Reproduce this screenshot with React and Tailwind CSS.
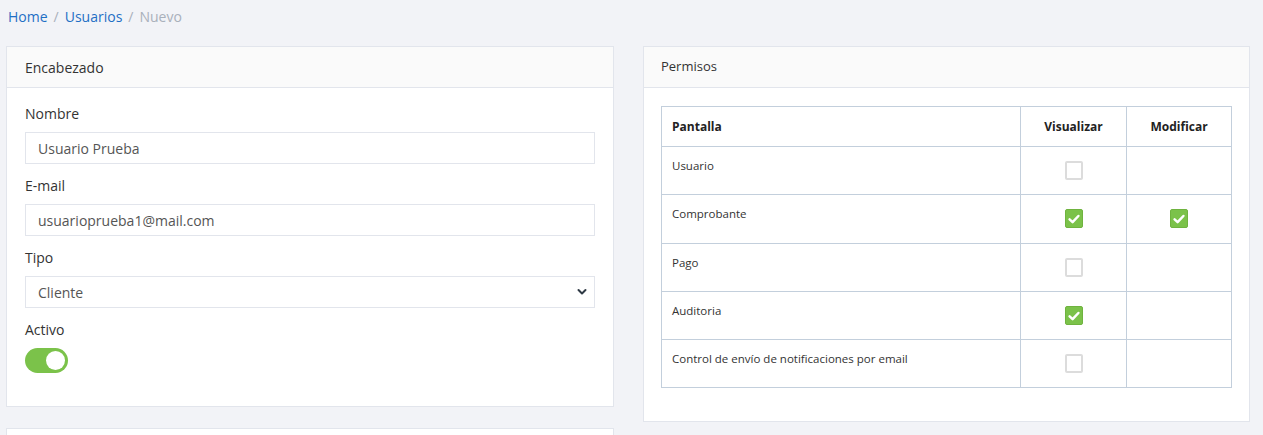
import React from "react";

const rows = [
  { name: "Usuario", v: false, m: null },
  { name: "Comprobante", v: true, m: true },
  { name: "Pago", v: false, m: null },
  { name: "Auditoria", v: true, m: null },
  { name: "Control de envío de notificaciones por email", v: false, m: null },
];

function Check({ checked }) {
  if (checked) {
    return (
      <div className="w-[18px] h-[19px] rounded-[2px] bg-[#7bc24a] border border-[#6fb33f] flex items-center justify-center">
        <svg width="14" height="14" viewBox="0 0 14 14">
          <path d="M2.6 7.4 L5.6 10.2 L11.4 4" fill="none" stroke="white" strokeWidth="2.5" strokeLinecap="round" strokeLinejoin="round" />
        </svg>
      </div>
    );
  }
  return <div className="w-[18px] h-[19px] rounded-[2px] bg-white border-2 border-[#dcdcdc]" />;
}

function Field({ label, children }) {
  return (
    <div className="mb-3">
      <div className="h-5 leading-5 text-[14px] text-[#333] mb-2">{label}</div>
      {children}
    </div>
  );
}

export default function App() {
  return (
    <div className="min-h-[435px] bg-[#f2f3f7] px-[6px] text-[#333]" style={{ fontFamily: '"Open Sans", "Noto Sans", sans-serif' }}>
      <div className="h-[46px] pt-[7px] text-[14px] leading-5 flex items-start gap-[6px] pl-[2px]">
        <span className="text-[#1f6fc5]">Home</span>
        <span className="text-[#a9b0bb]">/</span>
        <span className="text-[#1f6fc5]">Usuarios</span>
        <span className="text-[#a9b0bb]">/</span>
        <span className="text-[#a9b0bb]">Nuevo</span>
      </div>
      <div className="flex gap-[29px] items-start">
        <div className="w-[608px] flex flex-col gap-[21px]">
          <div className="bg-white border border-[#e2e5ec]">
            <div className="h-[41px] bg-[#fafafa] border-b border-[#e2e5ec] px-[18px] flex items-center text-[14px] text-[#333]">Encabezado</div>
            <div className="pt-4 px-[18px] pb-[21px]">
              <Field label="Nombre">
                <div className="h-8 border border-[#e2e5ec] px-3 flex items-center text-[14px] text-[#555]">Usuario Prueba</div>
              </Field>
              <Field label="E-mail">
                <div className="h-8 border border-[#e2e5ec] px-3 flex items-center text-[14px] text-[#555]">usuarioprueba1@mail.com</div>
              </Field>
              <Field label="Tipo">
                <div className="h-8 border border-[#e2e5ec] pl-3 pr-[7px] flex items-center justify-between text-[14px] text-[#555]">
                  <span>Cliente</span>
                  <svg width="10" height="8" viewBox="0 0 10 8">
                    <path d="M1.5 2 L5 5.5 L8.5 2" fill="none" stroke="#2f3a45" strokeWidth="2" strokeLinecap="round" strokeLinejoin="round" />
                  </svg>
                </div>
              </Field>
              <Field label="Activo">
                <div className="w-[43px] h-[25px] rounded-full bg-[#7bc24a] flex items-center justify-end pr-[3px]">
                  <div className="w-[19px] h-[19px] rounded-full bg-white" />
                </div>
              </Field>
            </div>
          </div>
          <div className="bg-white border border-[#e2e5ec] h-[20px] border-b-0" />
        </div>
        <div className="w-[607px] bg-white border border-[#e2e5ec]">
          <div className="h-[41px] bg-[#fafafa] border-b border-[#e2e5ec] px-[17px] flex items-center text-[13px] text-[#333]">Permisos</div>
          <div className="pt-[18px] px-[17px] pb-[33px]">
            <table className="w-full border-collapse text-[12px]">
              <thead>
                <tr className="h-10">
                  <th className="border border-[#c3cfdc] text-left font-bold px-[10px] w-[359px] text-[#222]">Pantalla</th>
                  <th className="border border-[#c3cfdc] text-center font-bold w-[106px] text-[#222]">Visualizar</th>
                  <th className="border border-[#c3cfdc] text-center font-bold text-[#222]">Modificar</th>
                </tr>
              </thead>
              <tbody>
                {rows.map((r) => (
                  <tr key={r.name} className="h-[48.3px]">
                    <td className="border border-[#c3cfdc] align-top px-[10px] pt-[10px] text-[11.5px] text-[#333]">{r.name}</td>
                    <td className="border border-[#c3cfdc] align-middle">
                      <div className="flex justify-center">
                        <Check checked={r.v} />
                      </div>
                    </td>
                    <td className="border border-[#c3cfdc] align-middle">
                      {r.m !== null && (
                        <div className="flex justify-center">
                          <Check checked={r.m} />
                        </div>
                      )}
                    </td>
                  </tr>
                ))}
              </tbody>
            </table>
          </div>
        </div>
      </div>
    </div>
  );
}
